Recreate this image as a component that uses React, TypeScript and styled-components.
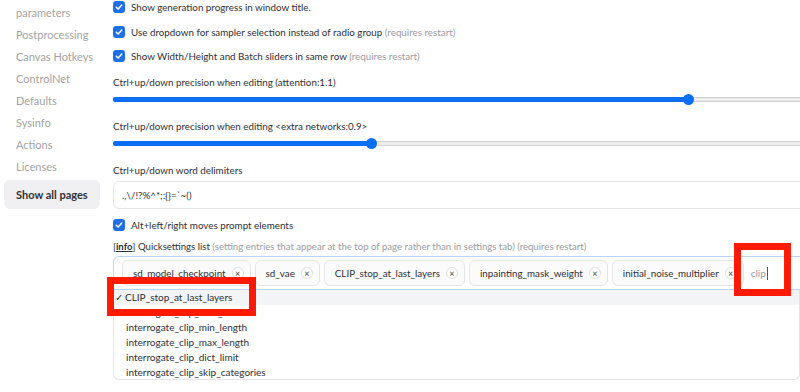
import React from "react";
import styled, { createGlobalStyle } from "styled-components";

const GlobalStyle = createGlobalStyle`
  body {
    margin: 0;
    overflow: hidden;
    background: #ffffff;
    font-family: Lato, "Noto Sans", sans-serif;
    color: #2d2f38;
  }
`;

const Page = styled.div`
  position: relative;
  width: 800px;
  height: 392px;
  overflow: hidden;
  display: flex;
`;

const Sidebar = styled.nav`
  width: 113px;
  flex-shrink: 0;
  display: flex;
  flex-direction: column;
  margin-top: -20px;
  padding-left: 4px;
  box-sizing: border-box;
`;

const NavItem = styled.div`
  padding-left: 12px;
  font-size: 11px;
  line-height: 22px;
  color: #a3a3a3;
`;

const NavButton = styled.div`
  width: 96px;
  height: 29px;
  margin-top: 2px;
  border-radius: 6px;
  background: #f0f0f2;
  padding-left: 12px;
  box-sizing: border-box;
  display: flex;
  align-items: center;
  font-size: 11px;
  font-weight: 700;
  color: #2f2f35;
`;

const Main = styled.main`
  width: 720px;
  flex-shrink: 0;
  margin-top: -5px;
  display: flex;
  flex-direction: column;
`;

const CheckRow = styled.label<{ $top?: number }>`
  height: 24.5px;
  margin-top: ${(p) => p.$top ?? 0}px;
  display: flex;
  align-items: center;
  gap: 6px;
  font-size: 9.8px;
  color: #2d2f38;
`;

const Box = styled.span`
  width: 12px;
  height: 12px;
  border-radius: 3px;
  background: #1f6feb;
  display: flex;
  align-items: center;
  justify-content: center;
  flex-shrink: 0;
`;

const Hint = styled.span`
  color: #9a9ca3;
`;

const FieldLabel = styled.div<{ $top: number }>`
  font-size: 9.8px;
  line-height: 16px;
  color: #2d2f38;
  margin-top: ${(p) => p.$top}px;
`;

const SliderRow = styled.div`
  height: 10px;
  margin-top: 5px;
  display: flex;
  align-items: center;
`;

const Track = styled.div`
  position: relative;
  width: 100%;
  height: 5px;
  border: 1px solid #cfcfcf;
  background: #ededed;
  border-radius: 2px;
  box-sizing: border-box;
`;

const Fill = styled.div`
  position: absolute;
  left: -1px;
  top: -1px;
  height: 5px;
  border-radius: 2px;
  background: #0b6ff5;
`;

const Thumb = styled.div`
  position: absolute;
  top: 50%;
  width: 11px;
  height: 11px;
  margin-left: -5px;
  margin-top: -5.5px;
  border-radius: 50%;
  background: #0b6ff5;
`;

const TextBox = styled.div`
  margin-top: 3px;
  height: 28px;
  border: 1px solid #e4e4e7;
  border-radius: 6px;
  box-sizing: border-box;
  padding-left: 8px;
  display: flex;
  align-items: center;
  font-size: 9.8px;
  color: #2d2f38;
`;

const InfoLabel = styled.div`
  font-size: 9.6px;
  line-height: 16px;
  margin-top: 2px;
  color: #2d2f38;
  white-space: nowrap;
  u {
    font-weight: 700;
  }
`;

const MultiSelect = styled.div`
  margin-top: 1px;
  height: 34px;
  border: 1px solid #b9d4f8;
  border-radius: 6px 6px 0 0;
  box-sizing: border-box;
  padding-left: 8px;
  display: flex;
  align-items: center;
  gap: 4px;
`;

const Chip = styled.div`
  height: 26px;
  display: flex;
  align-items: center;
  gap: 6px;
  padding: 0 6px 0 10px;
  border: 1px solid #e6e6ea;
  border-radius: 6px;
  background: #fbfbfb;
  box-sizing: border-box;
  font-size: 9.8px;
  color: #2d2f38;
  white-space: nowrap;
`;

const ChipClose = styled.span`
  width: 12px;
  height: 12px;
  border-radius: 50%;
  border: 1px solid #e0e0e3;
  background: #ffffff;
  box-sizing: border-box;
  display: flex;
  align-items: center;
  justify-content: center;
  font-size: 9px;
  color: #444;
`;

const SearchInput = styled.span`
  margin-left: 3px;
  font-size: 10px;
  color: #9a9ca3;
  border-right: 1px solid #555;
  padding-right: 1px;
  line-height: 13px;
`;

const Dropdown = styled.ul`
  list-style: none;
  margin: 0;
  padding: 0;
  width: 687px;
  height: 90px;
  border: 1px solid #e4e4e7;
  border-top: none;
  border-radius: 0 0 6px 6px;
  box-sizing: border-box;
`;

const Option = styled.li<{ $active?: boolean }>`
  height: 15px;
  line-height: 15px;
  padding-left: 12px;
  font-size: 10px;
  color: #2d2f38;
  background: ${(p) => (p.$active ? "#f3f4f6" : "transparent")};
  white-space: nowrap;
`;

const Tick = styled.span`
  margin-left: -11px;
  margin-right: 2px;
`;

const Annotation = styled.div<{ $x: number; $y: number; $w: number; $h: number }>`
  position: absolute;
  left: ${(p) => p.$x}px;
  top: ${(p) => p.$y}px;
  width: ${(p) => p.$w}px;
  height: ${(p) => p.$h}px;
  border: 7px solid #ff1a00;
  box-sizing: border-box;
  pointer-events: none;
`;

const navItems = [
  "Sampler",
  "parameters",
  "Postprocessing",
  "Canvas Hotkeys",
  "ControlNet",
  "Defaults",
  "Sysinfo",
  "Actions",
  "Licenses",
];

const chips = [
  "sd_model_checkpoint",
  "sd_vae",
  "CLIP_stop_at_last_layers",
  "inpainting_mask_weight",
  "initial_noise_multiplier",
];

const options = [
  "CLIP_stop_at_last_layers",
  "interrogate_clip_num_beams",
  "interrogate_clip_min_length",
  "interrogate_clip_max_length",
  "interrogate_clip_dict_limit",
  "interrogate_clip_skip_categories",
];

const Check = () => (
  <Box>
    <svg width="8" height="8" viewBox="0 0 8 8">
      <path d="M1.3 4.2 L3.2 6 L6.7 2" fill="none" stroke="#fff" strokeWidth="1.5" strokeLinecap="round" strokeLinejoin="round" />
    </svg>
  </Box>
);

const Slider = ({ value }: { value: number }) => (
  <SliderRow>
    <Track>
      <Fill style={{ width: `${value * 100}%` }} />
      <Thumb style={{ left: `${value * 100}%` }} />
    </Track>
  </SliderRow>
);

export default function App() {
  return (
    <>
      <GlobalStyle />
      <Page>
        <Sidebar>
          {navItems.map((item) => (
            <NavItem key={item}>{item}</NavItem>
          ))}
          <NavButton>Show all pages</NavButton>
        </Sidebar>
        <Main>
          <CheckRow>
            <Check />
            Show generation progress in window title.
          </CheckRow>
          <CheckRow>
            <Check />
            <span>
              Use dropdown for sampler selection instead of radio group <Hint>(requires restart)</Hint>
            </span>
          </CheckRow>
          <CheckRow>
            <Check />
            <span>
              Show Width/Height and Batch sliders in same row <Hint>(requires restart)</Hint>
            </span>
          </CheckRow>
          <FieldLabel $top={5}>Ctrl+up/down precision when editing (attention:1.1)</FieldLabel>
          <Slider value={0.8} />
          <FieldLabel $top={13}>Ctrl+up/down precision when editing &lt;extra networks:0.9&gt;</FieldLabel>
          <Slider value={0.358} />
          <FieldLabel $top={13}>Ctrl+up/down word delimiters</FieldLabel>
          <TextBox>{".,\\/!?%^*;:{}=`~()"}</TextBox>
          <CheckRow $top={4}>
            <Check />
            Alt+left/right moves prompt elements
          </CheckRow>
          <InfoLabel>
            [<u>info</u>] Quicksettings list{" "}
            <Hint>(setting entries that appear at the top of page rather than in settings tab) (requires restart)</Hint>
          </InfoLabel>
          <MultiSelect>
            {chips.map((c) => (
              <Chip key={c}>
                {c}
                <ChipClose>×</ChipClose>
              </Chip>
            ))}
            <SearchInput>clip</SearchInput>
          </MultiSelect>
          <Dropdown>
            {options.map((o, i) => (
              <Option key={o} $active={i === 0}>
                {i === 0 && <Tick>✓</Tick>}
                {o}
              </Option>
            ))}
          </Dropdown>
        </Main>
        <Annotation $x={107} $y={277} $w={149} $h={39} />
        <Annotation $x={734} $y={243} $w={57} $h={53} />
      </Page>
    </>
  );
}
